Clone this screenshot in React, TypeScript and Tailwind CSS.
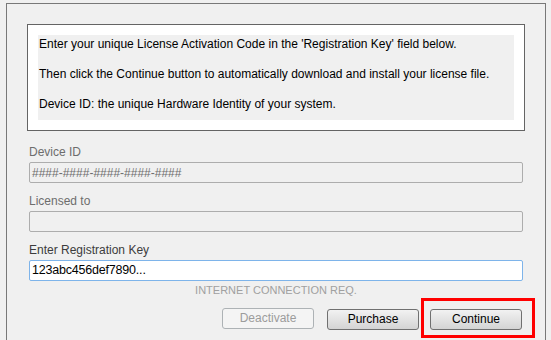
const fieldFont = { fontFamily: '"Liberation Sans", Arial, sans-serif' };

const Field = ({ label, value, active, labelDark }: { label: string; value?: string; active?: boolean; labelDark?: boolean }) => (
  <div className="flex flex-col">
    <div className={`h-[16px] leading-[16px] text-[12px] ${labelDark ? 'text-[#3c3c3c]' : 'text-[#6d6d6d]'}`}>{label}</div>
    <div
      className={`mt-[2px] h-[21px] w-[494px] flex items-center px-[2px] rounded-[2px] border ${
        active ? 'bg-white border-[#7eb4ea] text-[12.5px] tracking-[-0.2px] text-black' : 'bg-[#f0f0f0] border-[#adadad] text-[12px] text-[#6d6d6d]'
      }`}
    >
      {value}
    </div>
  </div>
);

const WinButton = ({ children, disabled }: { children: string; disabled?: boolean }) => (
  <button
    disabled={disabled}
    className={`h-[21px] w-[92px] rounded-[3px] border text-[12px] leading-none ${
      disabled
        ? 'border-[#adb2b5] bg-[#f4f4f4] text-[#9c9c9c]'
        : 'border-[#707070] bg-linear-to-b from-[#f2f2f2] to-[#d4d4d4] text-black'
    }`}
  >
    {children}
  </button>
);

export default function App() {
  return (
    <div className="w-[551px] h-[340px] overflow-hidden bg-[#f0f0f0] pt-[3px] pl-[6px]" style={fieldFont}>
      <div className="w-[540px] h-[400px] border border-[#787878] pt-[20px] pl-[20px]">
        {/* instructions */}
        <div className="w-[498px] border border-[#646464] bg-white p-[10px]">
          <div className="bg-[#f0f0f0] h-[85px] pl-[1px] flex flex-col gap-[12px] text-[12px] leading-[18px] text-black">
            <p>Enter your unique License Activation Code in the 'Registration Key' field below.</p>
            <p>Then click the Continue button to automatically download and install your license file.</p>
            <p>Device ID: the unique Hardware Identity of your system.</p>
          </div>
        </div>

        <div className="pl-[2px] mt-[13px] flex flex-col gap-[10px]">
          <Field label="Device ID" value="####-####-####-####-####" />
          <Field label="Licensed to" />
          <Field label="Enter Registration Key" value="123abc456def7890..." active labelDark />
        </div>

        <div className="pl-[2px] w-[496px] text-center text-[11px] leading-[16px] text-[#a0a0a0] mt-[1px]">
          INTERNET CONNECTION REQ.
        </div>

        <div className="flex items-center pl-[195px]">
          <WinButton disabled>Deactivate</WinButton>
          <div className="ml-[13px]">
            <WinButton>Purchase</WinButton>
          </div>
          <div className="ml-[2px] border-[3px] border-[#ff0000] pl-[6px] pr-[10px] py-[5px]">
            <WinButton>Continue</WinButton>
          </div>
        </div>
      </div>
    </div>
  );
}
